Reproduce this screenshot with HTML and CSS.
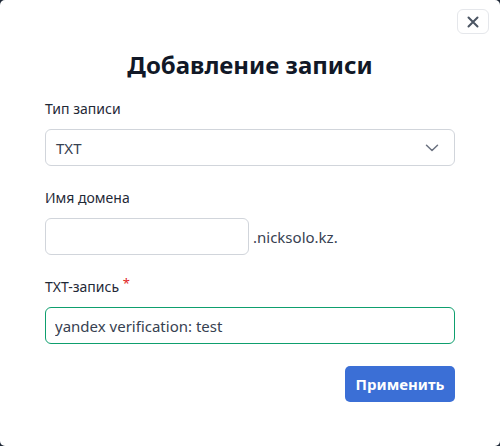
FILE: index.html
```html
<!DOCTYPE html>
<html lang="ru">
<head>
  <meta charset="UTF-8" />
  <title>Добавление записи</title>
  <link rel="stylesheet" href="styles.css">
</head>
<body>
  <div class="modal">
    <div class="modal-top">
      <button class="close" aria-label="Закрыть">
        <svg width="12" height="12" viewBox="0 0 12 12"><path d="M1.5 1.5l9 9M10.5 1.5l-9 9" stroke="#4b5563" stroke-width="2" stroke-linecap="round"/></svg>
      </button>
    </div>
    <h1>Добавление записи</h1>

    <div class="field">
      <label>Тип записи</label>
      <div class="select">
        <span>TXT</span>
        <svg width="14" height="8" viewBox="0 0 14 8"><path d="M1.5 1.2l5.5 5.3 5.5-5.3" fill="none" stroke="#6b7280" stroke-width="1.5" stroke-linecap="round" stroke-linejoin="round"/></svg>
      </div>
    </div>

    <div class="field">
      <label>Имя домена</label>
      <div class="domain-row">
        <input type="text" class="input short">
        <span class="suffix">.nicksolo.kz.</span>
      </div>
    </div>

    <div class="field">
      <label>ТХТ-запись <span class="req">*</span></label>
      <input type="text" class="input focused" value="yandex verification: test">
    </div>

    <div class="actions">
      <button class="submit">Применить</button>
    </div>
  </div>
</body>
</html>
```

FILE: styles.css
```css
body {
  margin: 0;
  background: #1f2937;
  font-family: "Noto Sans", "Open Sans", sans-serif;
  color: #1f2937;
}
.modal {
  width: 500px;
  height: 446px;
  box-sizing: border-box;
  background: #fff;
  border-radius: 5px;
  padding: 9px 45px 0 45px;
}
.modal-top {
  display: flex;
  justify-content: flex-end;
  margin-right: -34px;
}
.close {
  width: 32px;
  height: 25px;
  background: #fff;
  border: 1px solid #e5e7eb;
  border-radius: 6px;
  display: flex;
  align-items: center;
  justify-content: center;
  padding: 0;
}
h1 {
  margin: 14px 0 17px;
  text-align: center;
  font-size: 24px;
  line-height: 34px;
  font-weight: 700;
  color: #111827;
}
.field {
  margin-bottom: 22px;
}
label {
  display: block;
  font-size: 14px;
  line-height: 20px;
  color: #1f2937;
  margin-bottom: 10px;
}
.req {
  color: #e02424;
  position: relative;
  top: -4px;
  font-size: 13px;
}
.select {
  height: 37px;
  box-sizing: border-box;
  border: 1px solid #d1d5db;
  border-radius: 6px;
  display: flex;
  align-items: center;
  justify-content: space-between;
  padding: 0 15px 0 10px;
  font-size: 15px;
  color: #374151;
}
.domain-row {
  display: flex;
  align-items: center;
  gap: 4px;
}
.input {
  display: block;
  width: 100%;
  height: 37px;
  box-sizing: border-box;
  border: 1px solid #d1d5db;
  border-radius: 6px;
  padding: 0 9px;
  font-family: inherit;
  font-size: 15px;
  color: #374151;
  outline: none;
}
.input.short {
  width: 204px;
}
.input.focused {
  border-color: #0e9f6e;
}
.suffix {
  font-size: 15px;
  color: #374151;
}
.actions {
  display: flex;
  justify-content: flex-end;
}
.submit {
  width: 110px;
  height: 36px;
  background: #3b6fd6;
  border: none;
  border-radius: 5px;
  color: #fff;
  font-family: inherit;
  font-size: 15px;
  font-weight: 700;
}
```
